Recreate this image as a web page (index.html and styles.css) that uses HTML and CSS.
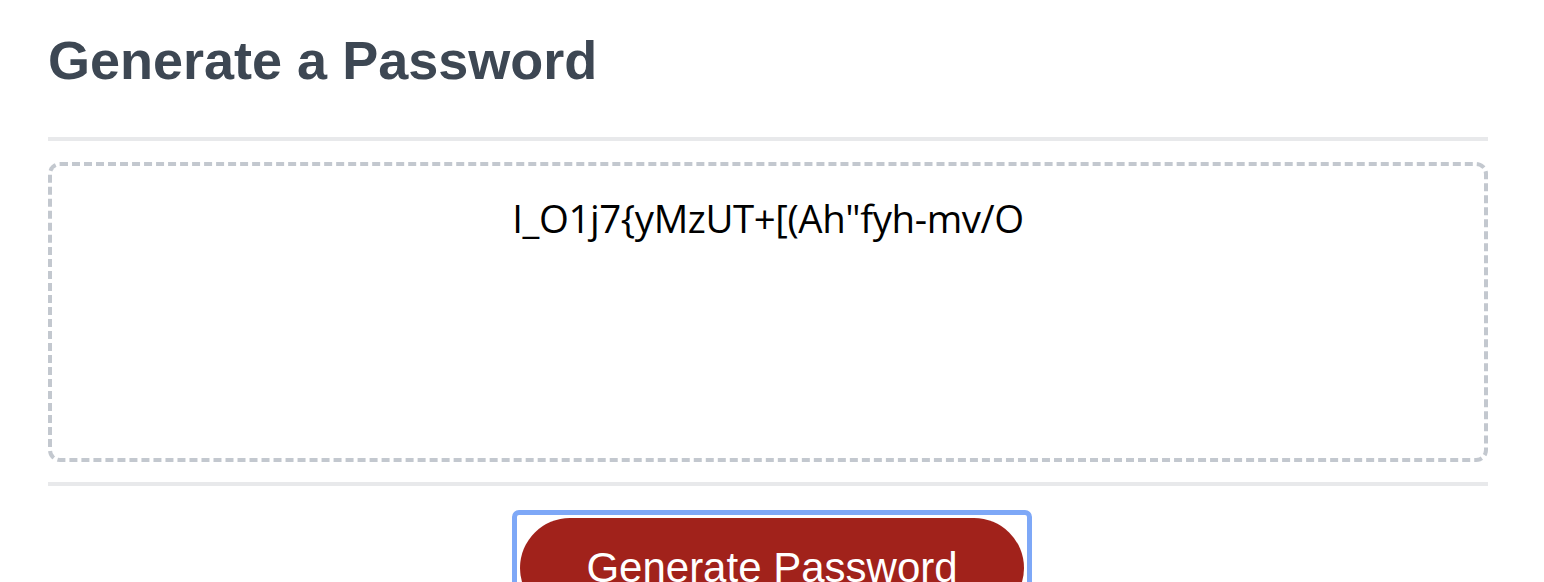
FILE: index.html
```html
<!DOCTYPE html>
<html lang="en">
<head>
<meta charset="utf-8">
<title>Password Generator</title>
<link rel="stylesheet" href="styles.css">
</head>
<body>
<div class="card">
  <div class="card-header">
    <h2 class="title">Generate a Password</h2>
  </div>
  <div class="card-body">
    <textarea class="password" readonly aria-label="Generated Password">I_O1j7{yMzUT+[(Ah"fyh-mv/O</textarea>
  </div>
  <div class="card-footer">
    <span class="focus-ring"><button class="btn" type="button">Generate Password</button></span>
  </div>
</div>
</body>
</html>
```

FILE: styles.css
```css
html, body {
  margin: 0;
  padding: 0;
  background: #ffffff;
  overflow: hidden;
  height: 582px;
}

.card {
  width: 1440px;
  margin-left: 48px;
  font-family: "Liberation Sans", Arial, sans-serif;
}

.card-header::after {
  content: "";
  display: block;
  height: 4px;
  background: #e8e9eb;
}

.title {
  margin: 0 0 46px 0;
  padding-top: 29px;
  font-size: 54px;
  line-height: 62px;
  font-weight: 700;
  color: #3d4753;
}

.card-body {
  padding: 21px 0 20px 0;
}

.password {
  display: block;
  box-sizing: border-box;
  width: 100%;
  height: 300px;
  margin: 0;
  padding: 26px 30px 0 30px;
  border: 4px dashed #c3c8cf;
  border-radius: 12px;
  font-family: "Open Sans", "Noto Sans", sans-serif;
  font-size: 38.4px;
  letter-spacing: -0.4px;
  color: #000000;
  text-align: center;
  resize: none;
  overflow: hidden;
  outline: none;
  background: #ffffff;
}

.card-footer {
  text-align: center;
}

.card-footer::before {
  content: "";
  display: block;
  height: 4px;
  background: #e8e9eb;
}

.focus-ring {
  display: inline-block;
  margin-top: 24px;
  margin-left: 8px;
  padding: 3px;
  border: 5px solid #7ea8f7;
  border-radius: 7px;
  background: #ffffff;
}

.btn {
  display: block;
  border: none;
  margin: 0;
  padding: 28px 66px;
  border-radius: 50px;
  background: #a1221b;
  color: #ffffff;
  font-family: "Liberation Sans", Arial, sans-serif;
  font-size: 42px;
  line-height: 44px;
  cursor: pointer;
}
```
